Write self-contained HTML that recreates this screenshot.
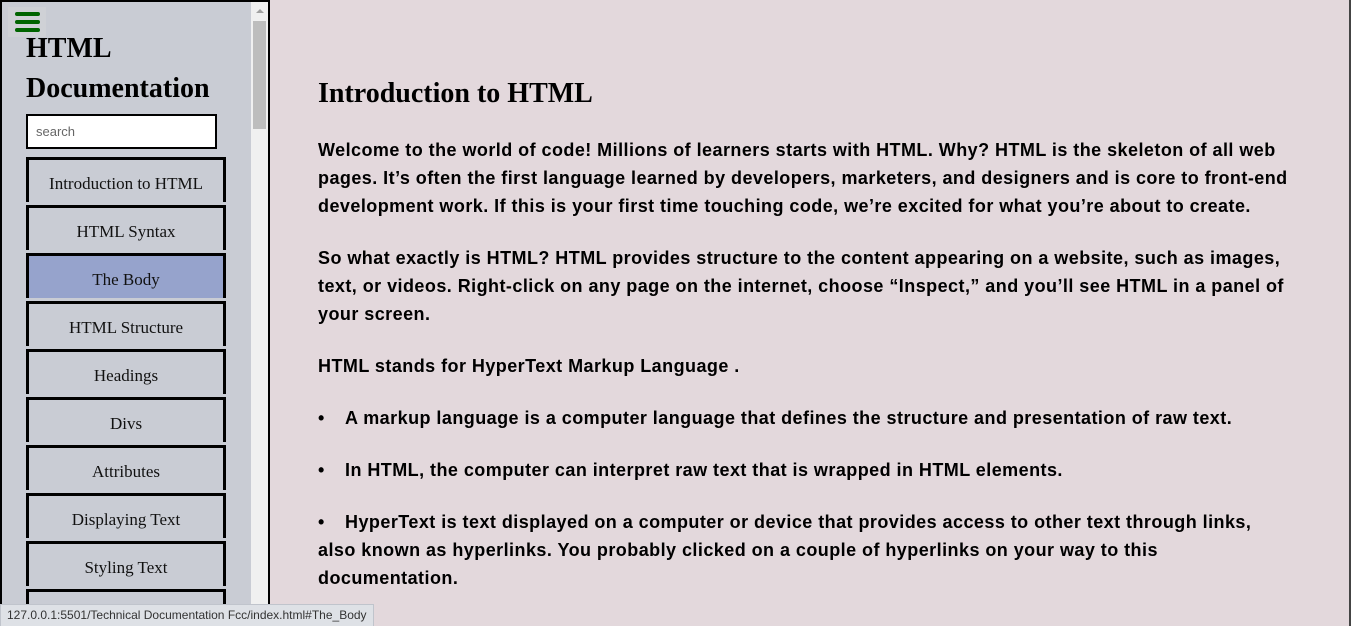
<!DOCTYPE html>
<html><head><meta charset="utf-8"><style>
html,body{margin:0;width:1351px;height:626px;overflow:hidden}
body{background:#e3d8dc;position:relative;font-family:"Liberation Sans",sans-serif}
#side{position:absolute;left:0;top:0;width:266px;height:624px;overflow:hidden;border:2px solid #000;border-bottom:none;background:#c9ccd4;box-sizing:content-box}
#sb{position:absolute;left:249px;top:0;width:17px;height:626px;background:#f0f0f0}
#thumb{position:absolute;left:2px;top:19px;width:13px;height:108px;background:#bdbdbd}
#arrow{position:absolute;left:5px;top:7px;width:0;height:0;border-left:4px solid transparent;border-right:4px solid transparent;border-bottom:4px solid #a0a0a0}
#burger{position:absolute;left:6px;top:5px;width:38px;height:30px;background:#cfd1d6}
#burger i{position:absolute;left:7px;width:25px;height:4px;border-radius:2px;background:#006400}
h1{position:absolute;left:24px;top:27px;margin:0;font-family:"Liberation Serif",serif;font-size:28px;line-height:40px;font-weight:bold;color:#000}
#search{position:absolute;left:24px;top:112px;width:179px;height:31px;border:2px solid #000;background:#fff;font-size:13px;color:#666;line-height:31px;padding-left:8px;box-sizing:content-box}
.nav{position:absolute;left:24px;width:194px;height:42px;border:3px solid #000;border-bottom:none;font-family:"Liberation Serif",serif;font-size:17px;text-align:center;line-height:48px;color:#111}
.act{background:#96a3cc}
#main{position:absolute;left:318px;top:0;width:1000px;font-weight:bold;font-size:18px;letter-spacing:0.45px;color:#000}
h2{position:absolute;top:78px;margin:0;font-family:"Liberation Serif",serif;font-size:28px;letter-spacing:0;white-space:nowrap}
.l{position:absolute;white-space:nowrap;line-height:28px}
#status{position:absolute;left:0;top:604px;height:21px;padding:0 6px;background:#dee1e6;border:1px solid #c0c4cc;font-size:12px;line-height:21px;color:#333}
#rb{position:absolute;right:0;top:0;width:2px;height:626px;background:#444}
.b{display:inline-block;width:27px}
</style></head><body>
<div id="side">
<div id="burger"><i style="top:5px"></i><i style="top:13px"></i><i style="top:21px"></i></div>
<h1>HTML<br>Documentation</h1>
<div id="search">search</div>
<div class="nav" style="top:155px">Introduction to HTML</div>
<div class="nav" style="top:203px">HTML Syntax</div>
<div class="nav act" style="top:251px">The Body</div>
<div class="nav" style="top:299px">HTML Structure</div>
<div class="nav" style="top:347px">Headings</div>
<div class="nav" style="top:395px">Divs</div>
<div class="nav" style="top:443px">Attributes</div>
<div class="nav" style="top:491px">Displaying Text</div>
<div class="nav" style="top:539px">Styling Text</div>
<div class="nav" style="top:587px"></div>
<div id="sb"><div id="arrow"></div><div id="thumb"></div></div>
</div>
<div id="main">
<h2>Introduction to HTML</h2>
<div class="l" style="top:136px">Welcome to the world of code! Millions of learners starts with HTML. Why? HTML is the skeleton of all web</div>
<div class="l" style="top:164px">pages. It’s often the first language learned by developers, marketers, and designers and is core to front-end</div>
<div class="l" style="top:192px">development work. If this is your first time touching code, we’re excited for what you’re about to create.</div>
<div class="l" style="top:244px">So what exactly is HTML? HTML provides structure to the content appearing on a website, such as images,</div>
<div class="l" style="top:272px">text, or videos. Right-click on any page on the internet, choose “Inspect,” and you’ll see HTML in a panel of</div>
<div class="l" style="top:300px">your screen.</div>
<div class="l" style="top:352px">HTML stands for HyperText Markup Language .</div>
<div class="l" style="top:404px"><span class="b">•</span>A markup language is a computer language that defines the structure and presentation of raw text.</div>
<div class="l" style="top:456px"><span class="b">•</span>In HTML, the computer can interpret raw text that is wrapped in HTML elements.</div>
<div class="l" style="top:508px"><span class="b">•</span>HyperText is text displayed on a computer or device that provides access to other text through links,</div>
<div class="l" style="top:536px">also known as hyperlinks. You probably clicked on a couple of hyperlinks on your way to this</div>
<div class="l" style="top:564px">documentation.</div>
</div>
<div id="rb"></div>
<div id="status">127.0.0.1:5501/Technical Documentation Fcc/index.html#The_Body</div>
</body></html>
